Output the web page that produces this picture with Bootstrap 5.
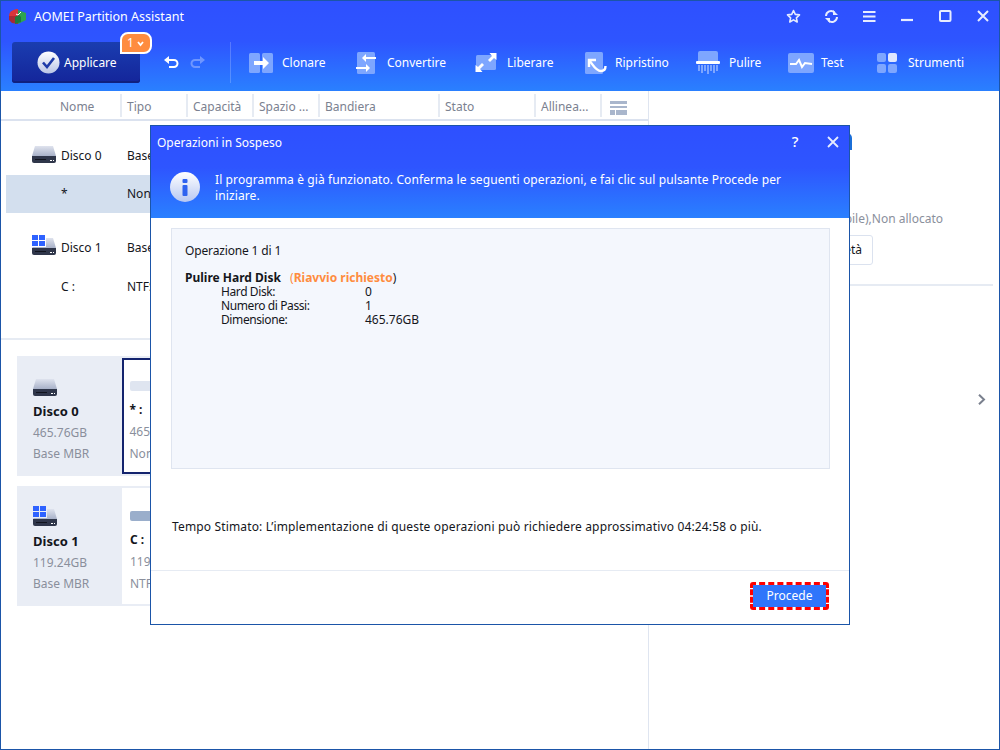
<!DOCTYPE html>
<html lang="it">
<head>
<meta charset="utf-8">
<title>AOMEI Partition Assistant</title>
<link href="https://cdn.jsdelivr.net/npm/bootstrap@5.3.0/dist/css/bootstrap.min.css" rel="stylesheet">
<style>
html,body{margin:0;background:#fff}
body{font-family:"Noto Sans","DejaVu Sans",sans-serif;font-size:12px;line-height:16px;color:#14161c}
.win{width:1000px;height:750px;position:relative;overflow:hidden;border:1px solid #1b55a8;background:#fff}
.hdr{height:90px;background:linear-gradient(180deg,#2e50ff 0,#2e55ff 45%,#2a80ff 100%);color:#fff}
.tbar{height:30px;padding-left:7px}
.tbar .ttl{margin-left:7px;font-size:12.5px;position:relative;top:1px}
.wc{width:38px;display:flex;justify-content:center}
.ctl{margin-right:-3px}
.tools{height:60px;padding-left:11px;padding-top:11px}
.apply{width:128px;height:41px;border-radius:3px;background:linear-gradient(180deg,#1a3db0,#14259a);box-shadow:inset 0 -2px 0 #10207e;padding-left:25px;position:relative;border:0;color:#fff;font-size:12px}
.cnt{position:absolute;left:108px;top:-10px;width:32px;height:22px;background:#ff8c3f;border:2px solid #fff;border-radius:8px 8px 8px 0;font-size:12px;line-height:17px;padding-left:5px;text-align:left}
.uv{width:91px;height:41px;padding-left:24px;gap:11px;border-right:1px solid rgba(255,255,255,.2)}
.ti{height:41px;color:#fff}
.ti svg{flex:none}
.t1{margin-left:18px;width:107px}.t2{width:119px}.t3{width:110px}.t4{width:111px}.t5{width:92px}.t6{width:89px}.t7{width:100px}
.t1 span{margin-left:9px}.t2 span{margin-left:10px}.t3 span{margin-left:10px}.t4 span{margin-left:8px}.t5 span{margin-left:9px}.t6 span{margin-left:7px}.t7 span{margin-left:11px}
.main{height:658px}
.lft{width:648px;border-right:1px solid #dfe5f0;flex:none}
.th{height:30px;border-bottom:2px solid #dbe2ef;color:#7b8190}
.th>div{height:23px;margin-top:3px;border-right:2px solid #e6ebf3;padding-left:5px;line-height:26px;white-space:nowrap}
.c0{width:121px;padding-left:59px!important}.c1,.c2,.c3,.c6{width:66px}.c4{width:120px}.c5{width:96px}
.lst{height:219px;padding-top:15px;border-bottom:2px solid #e6ebf3}
.rw{height:39px;padding-left:31px}
.rw .nm{width:66px}
.rw.sel{background:#d3dfee;margin-left:5px;padding-left:26px;height:38px}
.grp{margin-bottom:15px}
.ic{width:29px;flex:none}
.ic svg{display:block;margin-bottom:2px}
.ic svg.w{margin-bottom:5px}
.dks{padding:16px 0 0 16px}
.dk{height:120px;margin-bottom:10px;background:#e9edf5;width:620px}
.dl{width:105px;padding:23px 0 0 16px;flex:none;color:#8a8f9c;line-height:21px}
.dl.w{padding-top:20px}
.dl svg{display:block}
.dl b{color:#14161c;display:block;font-size:13px;line-height:20px;margin:5px 0 1px}
.dr{margin:2px 2px 2px 0;flex:1;background:#fff;padding:23px 0 0 8px;color:#8a8f9c;line-height:22px}
.dr.on{border:2.5px solid #14246e;padding:20.5px 0 0 5.5px}
.dr b{color:#14161c;display:block}
.br1{height:10px;width:480px;border-radius:2px;background:#dfe5f0;margin-bottom:8px}
.br2{background:#9aaecb}
.rgt{flex:1;position:relative;color:#8a8f9c;padding-top:42px}
.blp{height:17px;background:#1b6fd8;margin-bottom:61px;border-radius:0 5px 0 0;width:203px}
.rtx{padding-right:56px;justify-content:flex-end;white-space:nowrap;height:16px}
.prp{margin:8px 0 0 0;padding-right:126px;justify-content:flex-end}
.prp button{height:30px;width:118px;border:1px solid #dbe2ef;border-radius:3px;background:#fff;color:#14161c;font-size:12px;text-align:right;padding-right:10px}
.rln{height:2px;background:#e6ebf3;margin:19px 6px 0 1px}
.chv{padding:108px 13px 0 0;justify-content:flex-end}
.dlg{position:absolute;left:149px;top:124px;width:700px;height:500px;background:#fff;border:1px solid #1b55a8;z-index:5}
.dh{height:92px;background:linear-gradient(180deg,#2e50ff 0,#2e55ff 45%,#2a80ff 100%);color:#fff}
.dtt{height:33px;padding-left:6px}
.dq{width:38px;display:flex;justify-content:center;font-size:15px;font-weight:500}
.dq span{margin-top:-3px}
.dqs{margin-right:-3px}
.dms{padding-left:19px;padding-top:13px;letter-spacing:.11px}
.dms div{margin-left:15px;line-height:16px}
.bx{margin:10px 19px 0 20px;height:241px;background:#f4f7fd;border:1px solid #dfe5f0;padding:14px 13px;letter-spacing:-.15px}
.bx .sp{height:12px}
.oh{line-height:14px;letter-spacing:0}.oh i{font-style:normal;color:#ff8c3f;margin-left:3px}.oh b{font-weight:700}.oh b.or{color:#ff8c3f}
.dt{padding-left:36px;line-height:14px;letter-spacing:0}
.dt span{width:144px;display:inline-block;letter-spacing:-.4px}
.est{margin:50px 0 0 21px;height:16px;white-space:nowrap;letter-spacing:.15px}
.fln{height:1px;background:#e6ebf3;margin-top:35px}
.ft{padding:11px 20px 0 0;justify-content:flex-end}
.go{width:79px;height:28px;background:#2f75fb;background-clip:padding-box;color:#fff;border:3px dashed #f00;border-radius:3px;font-size:12px;padding:0;line-height:20px}
</style>
</head>
<body>
<div class="win">
  <div class="hdr">
    <div class="tbar d-flex align-items-center">
      <svg width="19" height="17" viewBox="0 0 19 17"><path d="M1 8C1 3 6 1 10 1v7z" fill="#d9343a"/><path d="M10 2l8 3v7l-8 4z" fill="#2ea44f"/><path d="M1 8h9v8l-6-1-3-3z" fill="#a62a35"/><path d="M7 9l4-2 2 2v5l-6 2z" fill="#1d7a3c"/><path d="M8 6l2 1 3-3" stroke="#fff" fill="none"/></svg>
      <span class="ttl">AOMEI Partition Assistant</span>
      <div class="ms-auto d-flex align-items-center ctl">
        <div class="wc"><svg width="15" height="15" viewBox="0 0 15 15"><path d="M7.5 1.5l1.8 3.9 4.2.5-3.1 2.9.8 4.2-3.7-2.1-3.7 2.1.8-4.2L1.500 5.900l4.200-.5z" fill="none" stroke="#e6ecff" stroke-width="1.6" stroke-linejoin="round"/></svg></div>
        <div class="wc"><svg width="17" height="15" viewBox="0 0 17 15"><path d="M3 7a5 5 0 0 1 8.500-3.500M14 8a5 5 0 0 1-8.500 3.500" fill="none" stroke="#e6ecff" stroke-width="2"/><path d="M10 1l5 5h-5zM7 14l-5-5h5z" fill="#e6ecff"/></svg></div>
        <div class="wc"><svg width="13" height="11" viewBox="0 0 13 11"><path d="M0 1h12.500M0 5.500h12.500M0 10h12.500" stroke="#e6ecff" stroke-width="2"/></svg></div>
        <div class="wc"><svg width="13" height="12" viewBox="0 0 13 12"><path d="M0 10h12" stroke="#e6ecff" stroke-width="2.200"/></svg></div>
        <div class="wc"><svg width="13" height="12" viewBox="0 0 13 12"><rect x="1" y="1" width="10.500" height="10" rx="1" fill="none" stroke="#e6ecff" stroke-width="2"/></svg></div>
        <div class="wc"><svg width="12" height="12" viewBox="0 0 12 12"><path d="M1 1l10 10M11 1L1 11" stroke="#e6ecff" stroke-width="2"/></svg></div>
      </div>
    </div>
    <div class="tools d-flex align-items-start">
      <button class="apply d-flex align-items-center">
        <svg width="23" height="23" viewBox="0 0 23 23"><defs><linearGradient id="ck" x1="0" y1="0" x2="0" y2="1"><stop offset="0" stop-color="#fff"/><stop offset="1" stop-color="#b9c4e6"/></linearGradient></defs><circle cx="11.500" cy="11.500" r="11" fill="url(#ck)"/><path d="M6 11.500l4 4.500 7-9" fill="none" stroke="#1d3aa8" stroke-width="2.600"/></svg>
        <span class="ms-1">Applicare</span>
        <span class="cnt">1 <svg width="7" height="6" viewBox="0 0 7 6"><path d="M1 1l2.500 3L6 1" fill="none" stroke="#fff" stroke-width="1.800"/></svg></span>
      </button>
      <div class="uv d-flex align-items-center">
        <svg width="15" height="13" viewBox="0 0 15 13"><path d="M4 4h6a3.500 3.500 0 0 1 0 7H5" fill="none" stroke="#fff" stroke-width="2"/><path d="M5 0v8L0 4z" fill="#fff"/></svg>
        <svg width="15" height="13" viewBox="0 0 15 13"><path d="M11 4H5a3.500 3.500 0 0 0 0 7h5" fill="none" stroke="#6f96ff" stroke-width="2"/><path d="M10 0v8l5-4z" fill="#6f96ff"/></svg>
      </div>
      <div class="ti t1 d-flex align-items-center"><svg width="24" height="20" viewBox="0 0 24 20"><rect width="11" height="20" rx="1.500" fill="#7ea6ff"/><rect x="13" width="11" height="20" rx="1.500" fill="#7ea6ff"/><path d="M5 8h9V4l6 6-6 6v-4H5z" fill="#fff"/></svg><span>Clonare</span></div>
      <div class="ti t2 d-flex align-items-center"><svg width="21" height="22" viewBox="0 0 21 22"><rect x="1" width="18" height="22" rx="1.500" fill="#7ea6ff"/><path d="M20 5H10V2L6 6l4 4V7h10zM0 15h10v-3l4 4-4 4v-3H0z" fill="#fff"/></svg><span>Convertire</span></div>
      <div class="ti t3 d-flex align-items-center"><svg width="22" height="19" viewBox="0 0 22 19"><rect x="1" y="2" width="20" height="15" rx="1.500" fill="#7ea6ff"/><path d="M21.500 0v7l-2.500-2-4 4-2-2 4-4-2.500-3zM.500 19v-7L3 14l4-4 2 2-4 4 2.500 3z" fill="#fff"/></svg><span>Liberare</span></div>
      <div class="ti t4 d-flex align-items-center"><svg width="22" height="22" viewBox="0 0 22 22"><rect width="18" height="22" rx="1.500" fill="#7ea6ff"/><path d="M4 15V8h7" fill="none" stroke="#fff" stroke-width="2.400"/><path d="M4.500 8.500C8 13 11 19 16 19c3 0 4.500-2 4.500-5" fill="none" stroke="#fff" stroke-width="2.400"/></svg><span>Ripristino</span></div>
      <div class="ti t5 d-flex align-items-center"><svg width="24" height="24" viewBox="0 0 24 24"><path d="M2 10V2q0-2 2-2h16q2 0 2 2v8z" fill="#7ea6ff"/><rect y="10" width="24" height="3" rx="1" fill="#fff"/><path d="M2 14h2v6H2zM5 14h2v8H5zM8 14h2v6H8zM11 14h2v9h-2zM14 14h2v6h-2zM17 14h2v8h-2zM20 14h2v6h-2z" fill="#7ea6ff"/></svg><span>Pulire</span></div>
      <div class="ti t6 d-flex align-items-center"><svg width="26" height="20" viewBox="0 0 26 20"><rect width="26" height="20" rx="2" fill="#7ea6ff"/><path d="M2 11h6l3-4 3 7 3-4 7 1" fill="none" stroke="#fff" stroke-width="2"/></svg><span>Test</span></div>
      <div class="ti t7 d-flex align-items-center"><svg width="20" height="20" viewBox="0 0 20 20"><rect width="9" height="9" rx="2" fill="#7ea6ff"/><rect x="11" width="9" height="9" rx="2" fill="#dfe7ff"/><rect y="11" width="9" height="9" rx="2" fill="#7ea6ff"/><rect x="11" y="11" width="9" height="9" rx="2" fill="#7ea6ff"/></svg><span>Strumenti</span></div>
    </div>
  </div>

  <div class="main d-flex">
    <div class="lft">
      <div class="th d-flex">
        <div class="c0">Nome</div><div class="c1">Tipo</div><div class="c2">Capacità</div><div class="c3">Spazio ...</div><div class="c4">Bandiera</div><div class="c5">Stato</div><div class="c6">Allinea...</div>
        <div class="border-0 ps-2"><svg width="17" height="14" viewBox="0 0 17 14"><path d="M0 0h17v3H0zM0 5h17v2H0zM0 9h5v5H0zM6 9h11v5H6z" fill="#a9b6cc"/></svg></div>
      </div>
      <div class="lst">
        <div class="grp">
          <div class="rw d-flex align-items-center"><div class="ic"><svg width="24" height="17" viewBox="0 0 24 17"><defs><linearGradient id="hd" x1="0" y1="0" x2="0" y2="1"><stop offset="0" stop-color="#dfe3ee"/><stop offset="1" stop-color="#a8b1c8"/></linearGradient></defs><path d="M3 0h18l3 10H0z" fill="url(#hd)"/><path d="M0 10h24v5q0 2-2 2H2q-2 0-2-2z" fill="#2f364a"/><path d="M3 13h11v1H3z" fill="#11141e"/><path d="M18 14h2v1h-2zM21 14h1v1h-1z" fill="#fff"/></svg></div><div class="nm">Disco 0</div><div>Base MBR</div></div>
          <div class="rw sel d-flex align-items-center"><div class="ic"></div><div class="nm">*</div><div>Non allocato</div></div>
        </div>
        <div>
          <div class="rw d-flex align-items-center"><div class="ic"><svg class="w" width="24" height="20" viewBox="0 0 24 20"><path d="M8 3h13l3 10H0z" fill="url(#hd)"/><path d="M0 13h24v5q0 2-2 2H2q-2 0-2-2z" fill="#2f364a"/><path d="M3 16h11v1H3z" fill="#11141e"/><path d="M18 17h2v1h-2zM21 17h1v1h-1z" fill="#fff"/><path d="M0 0h14v12H0z" fill="#fff"/><path d="M0 0h6v5H0zM7 0h6v5H7zM0 6h6v5H0zM7 6h6v5H7z" fill="#2e62ff"/></svg></div><div class="nm">Disco 1</div><div>Base GPT</div></div>
          <div class="rw d-flex align-items-center"><div class="ic"></div><div class="nm">C :</div><div>NTFS</div></div>
        </div>
      </div>
      <div class="dks">
        <div class="dk d-flex">
          <div class="dl"><svg width="24" height="17" viewBox="0 0 24 17"><path d="M3 0h18l3 10H0z" fill="url(#hd)"/><path d="M0 10h24v5q0 2-2 2H2q-2 0-2-2z" fill="#2f364a"/><path d="M3 13h11v1H3z" fill="#11141e"/><path d="M18 14h2v1h-2zM21 14h1v1h-1z" fill="#fff"/></svg><b>Disco 0</b>465.76GB<br>Base MBR</div>
          <div class="dr on"><div class="br1"></div><b>* :</b>465.76GB<br>Non allocato</div>
        </div>
        <div class="dk d-flex">
          <div class="dl w"><svg width="24" height="20" viewBox="0 0 24 20"><path d="M8 3h13l3 10H0z" fill="url(#hd)"/><path d="M0 13h24v5q0 2-2 2H2q-2 0-2-2z" fill="#2f364a"/><path d="M3 16h11v1H3z" fill="#11141e"/><path d="M18 17h2v1h-2zM21 17h1v1h-1z" fill="#fff"/><path d="M0 0h14v12H0z" fill="#e9edf5"/><path d="M0 0h6v5H0zM7 0h6v5H7zM0 6h6v5H0zM7 6h6v5H7z" fill="#2e62ff"/></svg><b>Disco 1</b>119.24GB<br>Base MBR</div>
          <div class="dr"><div class="br1 br2"></div><b>C :</b>119.24GB<br>NTFS</div>
        </div>
      </div>
    </div>
    <div class="rgt">
      <div class="blp"></div>
      <div class="rtx d-flex">Disco 0,(Inutilizzabile),Non allocato</div>
      <div class="prp d-flex"><button>Proprietà</button></div>
      <div class="rln"></div>
      <div class="chv d-flex"><svg width="8" height="11" viewBox="0 0 8 11"><path d="M1 .7l5 4.800-5 4.800" fill="none" stroke="#7a808e" stroke-width="2"/></svg></div>
    </div>
  </div>

  <div class="dlg">
    <div class="dh">
      <div class="dtt d-flex align-items-center">
        <span>Operazioni in Sospeso</span>
        <div class="ms-auto d-flex dqs">
          <div class="dq"><span>?</span></div>
          <div class="dq"><svg width="12" height="12" viewBox="0 0 12 12"><path d="M1 1l10 10M11 1L1 11" stroke="#e6ecff" stroke-width="1.800"/></svg></div>
        </div>
      </div>
      <div class="dms d-flex">
        <svg width="30" height="30" viewBox="0 0 30 30" class="flex-none"><defs><linearGradient id="inf" x1="0" y1="0" x2="0" y2="1"><stop offset="0" stop-color="#fff"/><stop offset="1" stop-color="#b7c7f2"/></linearGradient></defs><circle cx="15" cy="15" r="15" fill="url(#inf)"/><rect x="12.500" y="7" width="5" height="4" rx="1" fill="#2e62f0"/><rect x="12.500" y="13" width="5" height="11" rx="1" fill="#2e62f0"/></svg>
        <div>Il programma è già funzionato. Conferma le seguenti operazioni, e fai clic sul pulsante Procede per<br>iniziare.</div>
      </div>
    </div>
    <div class="bx">
      <div>Operazione 1 di 1</div>
      <div class="sp"></div>
      <div class="oh"><b>Pulire Hard Disk</b>&nbsp; <i>(</i><b class="or">Riavvio richiesto</b>)</div>
      <div class="dt"><span>Hard Disk:</span>0</div>
      <div class="dt"><span>Numero di Passi:</span>1</div>
      <div class="dt"><span>Dimensione:</span>465.76GB</div>
    </div>
    <div class="est">Tempo Stimato: L’implementazione di queste operazioni può richiedere approssimativo 04:24:58 o più.</div>
    <div class="fln"></div>
    <div class="ft d-flex"><button class="go">Procede</button></div>
  </div>
</div>
<script src="https://cdn.jsdelivr.net/npm/bootstrap@5.3.0/dist/js/bootstrap.bundle.min.js"></script>
</body>
</html>
